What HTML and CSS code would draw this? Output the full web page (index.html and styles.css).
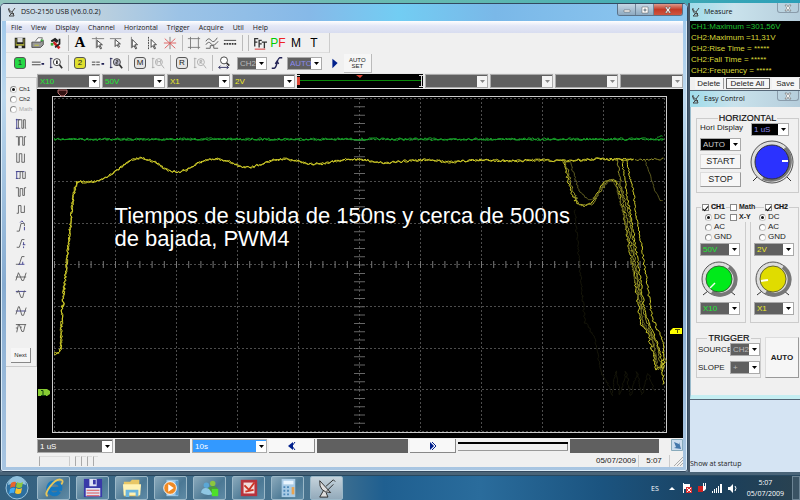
FILE: index.html
```
<!DOCTYPE html>
<html lang="es">
<head>
  <meta charset="UTF-8" />
  <title>DSO-2150 USB</title>
  <link rel="stylesheet" href="styles.css">
</head>
<body>
  <main class="desktop">
    <section class="window scope-window">
      <header class="titlebar">
        <svg class="app-icon" viewBox="0 0 10 10"><path d="M1 2l6 5M2 1q-1 6 5 6M5 5l3-4M5 6l-3 3h5l-1-3" /></svg>
        <h1>DSO-2150 USB (V6.0.0.2)</h1>
        <div class="window-buttons">
          <button aria-label="Minimize"><svg viewBox="0 0 8 8"><path d="M1 4h6v2H1z" /></svg></button>
          <button aria-label="Maximize"><svg viewBox="0 0 8 8"><path fill-rule="evenodd" d="M1 1h6v6H1zM3 3v2h2V3z" /></svg></button>
          <button class="close" aria-label="Close"><svg viewBox="0 0 8 8"><path d="M1 1h2l1 2 1-2h2L5 4l2 3H5L4 5 3 7H1l2-3z" /></svg></button>
        </div>
      </header>

      <nav class="menu">
        <button>File</button>
        <button>View</button>
        <button>Display</button>
        <button>Channel</button>
        <button>Horizontal</button>
        <button>Trigger</button>
        <button>Acquire</button>
        <button>Util</button>
        <button>Help</button>
      </nav>

      <div class="toolbars">
        <div class="toolbar first">
          <button class="tool" aria-label="Save"><svg viewBox="0 0 16 16"><path fill="#222" d="M2 2h12v12H2z" /><path fill="#a5a536" d="M3 3h1v8H3zM12 3h1v8h-1zM3 9h10v2H3z" /><path fill="#ddd" d="M5 2h6v5H5zM6 11h4v3H6z" /></svg></button>
          <button class="tool" aria-label="Print"><svg viewBox="0 0 16 16"><path fill="#fff" stroke="#666" d="M5 6l3-4h5l-2 5" /><path fill="#999" stroke="#444" d="M1 7h10l3-2v5l-3 3H1z" /><path fill="#cc3" d="M4 10h5v1H4z" /><path fill="#4a4" d="M11 4h3v2h-3z" /></svg></button>
          <button class="tool" aria-label="Utility"><svg viewBox="0 0 16 16"><path fill="#222" d="M2 5l5-3 4 3-2 3-3-2-3 1z" /><path stroke="#c22" stroke-width="3" d="M5 7l7 7" /><path stroke="#222" stroke-width="2" d="M12 3v6l-5 4" fill="none" /><path fill="#3a3" d="M2 8h3v3H2z" /></svg></button>
          <span class="sep"></span>
          <button class="tool letter serif">A</button>
          <button class="tool" aria-label="Cross cursor"><svg class="line" viewBox="0 0 16 16"><path d="M1 3h14M6 1v13" stroke="#777" /><path fill="#fff" d="M7 5v8l2-2 2 4 1-1-2-4h3z" /></svg></button>
          <button class="tool" aria-label="Horizontal cursor"><svg class="line" viewBox="0 0 16 16"><path d="M1 3h13" stroke="#777" /><path fill="#fff" d="M7 4v8l2-2 2 3 1-1-2-3h3z" /></svg></button>
          <button class="tool" aria-label="Vertical cursor"><svg class="line" viewBox="0 0 16 16"><path d="M5 1v13" stroke="#777" /><path fill="#fff" d="M6 4v9l2-2 2 4 1-1-2-4h3z" /></svg></button>
          <button class="tool" aria-label="Dotted cursor"><svg class="line" viewBox="0 0 16 16"><path d="M4 1v14" stroke-dasharray="2 1" /><path fill="#fff" d="M7 4v9l2-2 2 4 1-1-2-4h3z" /></svg></button>
          <button class="tool" aria-label="Clear cursors"><svg class="line" viewBox="0 0 16 16"><path stroke="#777" d="M8 1v14" /><path stroke="#d55" d="M2 3l12 11M14 3L2 14M1 8h14" /></svg></button>
          <span class="sep"></span>
          <button class="tool" aria-label="Grid"><svg class="line" viewBox="0 0 16 16"><path stroke="#777" d="M4 1v14M13 1v14M1 3h14M1 13h14" /></svg></button>
          <button class="tool" aria-label="Persistence"><svg class="line" viewBox="0 0 16 16"><path stroke="#555" fill="none" d="M1 6q3-5 6-1t7-3M1 10q3-5 6-1t8-3M1 14h5v-3h4v3h5" /></svg></button>
          <button class="tool" aria-label="Line style"><svg class="line" viewBox="0 0 16 16"><path d="M1 5h14" /><path stroke-width="2" stroke-dasharray="2 1" d="M1 9h14" /></svg></button>
          <span class="sep"></span>
          <span class="sep"></span>
          <button class="tool" aria-label="FFT"><svg class="line" viewBox="0 0 16 16"><path stroke-width="1.500" fill="none" d="M2 12V3h4M2 7h3M7 13V5h3M7 9h3M10 7h6M13 7v7" /><path stroke="#d22" d="M2 15h12" /></svg></button>
          <button class="tool letter"><span class="pass">P</span><span class="fail">F</span></button>
          <button class="tool letter">M</button>
          <button class="tool letter">T</button>
        </div>
        <div class="toolbar">
          <button class="tool"><span class="badge green">1</span></button>
          <button class="tool" aria-label="CH1 level"><svg class="line" viewBox="0 0 16 16"><path d="M1 7h10M1 10h10" /><path stroke="#225" stroke-width="2" d="M12 9h3" /></svg></button>
          <button class="tool" aria-label="CH1 zoom"><svg class="line" viewBox="0 0 16 16"><path stroke="#225" d="M2 2v12M1 3h3M1 13h3" /><circle cx="9" cy="7" r="4" fill="#fff" /><path stroke-width="2" d="M12 10l3 4M9 5v4" /></svg></button>
          <span class="sep"></span>
          <button class="tool"><span class="badge yellow">2</span></button>
          <button class="tool" aria-label="CH2 level"><svg class="line" viewBox="0 0 16 16"><path d="M1 7h10M1 10h10" stroke-dasharray="4 1" /><path stroke="#225" stroke-width="2" d="M12 9h3" /></svg></button>
          <button class="tool" aria-label="CH2 zoom"><svg class="line" viewBox="0 0 16 16"><path stroke="#225" d="M2 2v12M1 3h3M1 13h3" /><circle cx="9" cy="7" r="4" fill="#bbc" /><path stroke-width="2" d="M12 10l3 4" /><path d="M8 5h2v2H8v2h2" fill="none" /></svg></button>
          <span class="sep"></span>
          <button class="tool"><span class="badge">M</span></button>
          <button class="tool" aria-label="Math zoom"><svg class="line off" viewBox="0 0 16 16"><path d="M2 2v12M1 3h3M1 13h3M7 9V5l2 2 2-2v4M12 10l3 4" fill="none" /><circle cx="9" cy="7" r="4" fill="none" /></svg></button>
          <span class="sep"></span>
          <button class="tool"><span class="badge">R</span></button>
          <button class="tool" aria-label="Reference zoom"><svg class="line off" viewBox="0 0 16 16"><path d="M2 2v12M1 3h3M1 13h3M8 9V5h2v2H8l3 2M12 10l3 4" fill="none" /><circle cx="9" cy="7" r="4" fill="none" /></svg></button>
          <span class="sep"></span>
          <button class="tool" aria-label="Time zoom"><svg class="line" viewBox="0 0 16 16"><circle cx="8" cy="5" r="4" fill="#fff" /><path stroke-width="2" d="M11 8l3 3" /><path stroke="#225" d="M2 13h11M4 11l-2 2 2 2M11 11l2 2-2 2" fill="none" /></svg></button>
          <select class="combo small-ch" aria-label="Trigger source"><option>CH2</option></select>
          <button class="tool" aria-label="Rising edge"><svg class="line" viewBox="0 0 16 16"><path stroke="#225" stroke-width="1.500" fill="none" d="M2 14h3Q7 13 8 8t3-6h3M6 9l2-3 2 3" /></svg></button>
          <select class="combo blue-text small-mode" aria-label="Trigger mode"><option>AUTO</option></select>
          <button class="tool" aria-label="Run"><svg viewBox="0 0 16 16"><path fill="#00208c" d="M5 3l6 5-6 6z" /></svg></button>
          <button class="autoset">AUTO<br>SET</button>
        </div>
      </div>

      <div class="work">
        <aside class="measures">
          <div class="measure-panel">
            <label><input type="radio" name="src" checked> Ch1</label>
            <label><input type="radio" name="src"> Ch2</label>
            <label class="off"><input type="radio" name="src" disabled> Math</label>
            <button aria-label="Vpp"><svg viewBox="0 0 14 14"><path class="mark" d="M2 1v12M1 2h5M1 12h5" /><path d="M4 12V2h4v10h2V2h2v10h1" /></svg></button>
            <button aria-label="Vamp"><svg viewBox="0 0 14 14"><path d="M1 2h3v10h1V2h4v10h2V2h2" /></svg></button>
            <button aria-label="Vmin"><svg viewBox="0 0 14 14"><path d="M2 1v11h3V2h3v10h3V2" /></svg></button>
            <button aria-label="Vmax"><svg viewBox="0 0 14 14"><path class="mark" d="M2 3v8M1 3h3M1 11h3M3 3h8" /><path d="M4 11h2V3h3v8h3V3" /></svg></button>
            <button aria-label="Vtop"><svg viewBox="0 0 14 14"><path d="M1 2h3v10h2V3h3v8h2V2h2" /></svg></button>
            <button aria-label="Vbase"><svg viewBox="0 0 14 14"><path d="M2 12h2V3h3v8h4V3" /></svg></button>
            <button aria-label="Overshoot"><svg viewBox="0 0 14 14"><path d="M2 13h3l2-9h4v3" /><path class="mark" d="M6 3l2-2 2 2M11 8v4" /></svg></button>
            <button aria-label="Preshoot"><svg viewBox="0 0 14 14"><path d="M2 12h3l3-9h3" /><path class="mark" d="M10 6v3M10 11v2M9 9h3" /></svg></button>
            <button aria-label="Rise time"><svg viewBox="0 0 14 14"><path d="M1 12h4l3-9h3" /><path class="mark" d="M4 12h7M9 9v3" /></svg></button>
            <button aria-label="Mean"><svg viewBox="0 0 14 14"><path d="M1 11L4 2l2 4 2 5h2l3-9M1 7h12" /></svg></button>
            <button aria-label="RMS"><svg viewBox="0 0 14 14"><path class="mark" d="M1 4h12" /><path d="M2 6l2-3 3 8h2l2-8" /></svg></button>
            <button aria-label="Cycle mean"><svg viewBox="0 0 14 14"><path class="mark" d="M1 7h12" /><path d="M1 11L4 2h1l3 10h2l3-9" /></svg></button>
            <button aria-label="Cycle RMS"><svg viewBox="0 0 14 14"><path d="M1 3h12M2 12l2-9h1l3 8h2l2-8M1 7h2M6 6h2" /></svg></button>
            <button class="next">Next</button>
          </div>
        </aside>

        <div class="display">
          <div class="channel-bar">
            <select class="combo green-text" aria-label="CH1 probe"><option>X10</option></select>
            <select class="combo green-text" aria-label="CH1 volts"><option>50V</option></select>
            <select class="combo yellow-text" aria-label="CH2 probe"><option>X1</option></select>
            <select class="combo yellow-text" aria-label="CH2 volts"><option>2V</option></select>
            <svg class="overview" viewBox="0 0 126 14" preserveAspectRatio="none">
              <path stroke="#0a8a0a" d="M3 6.500h121" />
              <path fill="#d43" d="M0 3h3v8H0zM59 1h7l-3 3z" />
              <path stroke="#ddd" fill="none" d="M0 1.500h3M122 1.500h4M124.500 1v11M122 12.500h4" />
            </svg>
            <select class="combo" disabled aria-label="Channel 3 probe"><option></option></select>
            <select class="combo" disabled aria-label="Channel 3 volts"><option></option></select>
            <select class="combo" disabled aria-label="Channel 4 probe"><option></option></select>
            <select class="combo" disabled aria-label="Channel 4 volts"><option></option></select>
          </div>

          <div class="screen">
            <svg id="plot" class="plot" viewBox="37 89 646 349" preserveAspectRatio="none">
              <g class="grid">
                <path d="M54 98.500H665M54 139.500H665M54 181.500H665M54 223.500H665M54 264.500H665M54 306.500H665M54 348.500H665M54 389.500H665M54 431.500H665" />
                <path d="M54.500 98V431M115.500 98V431M176.500 98V431M237.500 98V431M298.500 98V431M359.500 98V431M420.500 98V431M481.500 98V431M542.500 98V431M603.500 98V431M664.500 98V431" />
              </g>
              <path class="ticks-x" d="M54 264.500H665" />
              <path class="ticks-y" d="M359.500 98V431" />
              <rect class="frame" x="52.500" y="96.500" width="614" height="336" />
              <path class="trigger-pos" d="M58 90h9v3l-3 3h-3l-3-3z" />
              <path fill="#8c3" d="M38 389h9l3 2v3l-3 2h-9z" />
              <path stroke="#141" d="M41 390.500h2v5M41 395.500h5" fill="none" />
              <path fill="#ff0" d="M682 328h-9l-3 3v3h12z" />
              <path stroke="#550" d="M675 329.500h5M677.500 329v4" fill="none" />
            </svg>
            <p class="caption">Tiempos de subida de 150ns y cerca de 500ns<br>de bajada, PWM4</p>
          </div>

          <div class="time-bar">
            <select class="combo white-text" aria-label="Time base"><option>1 uS</option></select>
            <span class="slot"></span>
            <select class="combo selected" aria-label="Persistence time"><option>10s</option></select>
            <button class="step" aria-label="Left"><svg viewBox="0 0 10 10"><path fill="#00208c" d="M6 1v8L1 5z" /><path stroke="#00208c" d="M8 1L5 5l3 4" fill="none" /></svg></button>
            <span class="slot"></span>
            <button class="step" aria-label="Right"><svg viewBox="0 0 10 10"><path fill="#00208c" d="M2 1v8l4-4z" /><path stroke="#00208c" d="M4 1l4 4-4 4" fill="none" /></svg></button>
            <input class="position" type="range" min="0" max="100" value="100" aria-label="Position">
            <span class="slot"></span>
            <svg class="corner" viewBox="0 0 12 12"><path fill="#cde" stroke="#8ab" d="M.500.500h11v11H.500z" /><path fill="#47a" d="M3 3l5 2V3l2 7-7-1 2-1z" /></svg>
          </div>
        </div>
      </div>

      <footer class="status">
        <span class="status-left"></span>
        <span class="status-cell wide"></span>
        <span class="status-cell"></span><span class="status-cell"></span><span class="status-cell"></span><span class="status-cell"></span>
        <span class="status-date">05/07/2009</span>
        <span class="status-time">5:07</span>
        <svg class="grip" viewBox="0 0 9 9"><path d="M0 9l9-9M3 9l6-6M6 9l3-3" /></svg>
      </footer>
    </section>

    <aside class="side">
      <section class="tool-window">
        <header class="titlebar">
          <svg class="app-icon" viewBox="0 0 10 10"><path d="M1 2l6 5M2 1q-1 6 5 6M5 5l3-4M5 6l-3 3h5l-1-3" /></svg>
          <h2>Measure</h2>
          <button class="tool-close" aria-label="Close"><svg viewBox="0 0 8 8"><path d="M1 1h2l1 2 1-2h2L5 4l2 3H5L4 5 3 7H1l2-3z" /></svg></button>
        </header>
        <ul class="readings">
          <li class="ch1">CH1:Maximum =301,56V</li>
          <li>CH2:Maximum =11,31V</li>
          <li>CH2:Rise Time = *****</li>
          <li>CH2:Fall Time = *****</li>
          <li>CH2:Frequency = *****</li>
        </ul>
        <div class="reading-actions">
          <button>Delete</button>
          <button class="focus">Delete All</button>
          <button>Save</button>
        </div>
      </section>

      <section class="tool-window">
        <header class="titlebar">
          <svg class="app-icon" viewBox="0 0 10 10"><path d="M1 2l6 5M2 1q-1 6 5 6M5 5l3-4M5 6l-3 3h5l-1-3" /></svg>
          <h2>Easy Control</h2>
          <button class="tool-close" aria-label="Close"><svg viewBox="0 0 8 8"><path d="M1 1h2l1 2 1-2h2L5 4l2 3H5L4 5 3 7H1l2-3z" /></svg></button>
        </header>
        <div class="controls">
          <fieldset class="group horizontal">
            <legend>HORIZONTAL</legend>
            <div class="stack">
              <label for="hori">Hori Display</label>
              <select id="hori" class="combo black"><option>AUTO</option></select>
              <button class="push">START</button>
              <button class="push">STOP</button>
            </div>
            <div class="stack dial">
              <select class="combo black blue-text" aria-label="Time per division"><option>1 uS</option></select>
              <svg class="knob big" viewBox="0 0 46 46">
                <path class="legs" d="M9 37l-5 5M37 37l5 5" />
                <circle class="rim" cx="23" cy="23" r="21" />
                <path class="shade" d="M36 9a19 19 0 0 1-22 30" />
                <circle cx="23" cy="23" r="17" fill="#2b32ff" stroke="#333" />
                <path stroke="#fff" stroke-width="2" d="M33 22h6" />
              </svg>
            </div>
          </fieldset>

          <div class="channels">
            <fieldset class="group channel">
              <legend><label><input type="checkbox" checked> CH1</label></legend>
              <label><input type="radio" name="c1" checked> DC</label>
              <label><input type="radio" name="c1"> AC</label>
              <label><input type="radio" name="c1"> GND</label>
              <select class="combo green-text" aria-label="CH1 volts per division"><option>50V</option></select>
              <svg class="knob" viewBox="0 0 38 38">
                <path class="legs" d="M8 31l-5 4M30 31l5 4" />
                <circle class="rim" cx="19" cy="19" r="17" />
                <path class="shade" d="M29 7a15 15 0 0 1-17 25" />
                <circle cx="19" cy="19" r="13" fill="#00ea1a" stroke="#363" />
                <path stroke="#efe" stroke-width="1.500" d="M15 23l-5 5" />
              </svg>
              <select class="combo green-text" aria-label="CH1 probe"><option>X10</option></select>
            </fieldset>
            <fieldset class="group channel">
              <legend><label><input type="checkbox" checked> CH2</label></legend>
              <label><input type="radio" name="c2" checked> DC</label>
              <label><input type="radio" name="c2"> AC</label>
              <label><input type="radio" name="c2"> GND</label>
              <select class="combo yellow-text" aria-label="CH2 volts per division"><option>2V</option></select>
              <svg class="knob" viewBox="0 0 38 38">
                <path class="legs" d="M8 31l-5 4M30 31l5 4" />
                <circle class="rim" cx="19" cy="19" r="17" />
                <path class="shade" d="M29 7a15 15 0 0 1-17 25" />
                <circle cx="19" cy="19" r="13" fill="#e0dc00" stroke="#663" />
                <path stroke="#ffe" stroke-width="2" d="M7 21l7-1" />
              </svg>
              <select class="combo yellow-text" aria-label="CH2 probe"><option>X1</option></select>
            </fieldset>
            <div class="math">
              <label><input type="checkbox"> Math</label>
              <label><input type="checkbox"> X-Y</label>
            </div>
          </div>

          <div class="trigger-row">
            <fieldset class="group trigger">
              <legend>TRIGGER</legend>
              <label for="source">SOURCE</label>
              <select id="source" class="combo"><option>CH2</option></select>
              <label for="slope">SLOPE</label>
              <select id="slope" class="combo"><option>+</option></select>
            </fieldset>
            <button class="push auto">AUTO</button>
          </div>
        </div>
      </section>

      <div class="startup">Show at startup</div>
    </aside>
  </main>

  <footer class="taskbar">
    <button class="start" aria-label="Start"><svg viewBox="0 0 24 24">
      <circle cx="12" cy="12" r="11" fill="#2d6f9f" stroke="#9cc4dc" />
      <path fill="#8fc0dc" d="M3 9a9 9 0 0 1 18 0q-9-4-18 0" />
      <path fill="#e8642c" d="M6 7q3-2 5-1l-1 5q-2-1-5 1z" /><path fill="#8cc63f" d="M12 6q3 2 6 0l-1 5q-3 2-6 0z" />
      <path fill="#3fa9f5" d="M5 13q3-2 5-1l-1 5q-2-1-5 1z" /><path fill="#fbc52d" d="M11 12q3 2 6 0l-1 5q-3 2-6 0z" />
    </svg></button>
    <nav class="tasks">
      <button aria-label="Internet Explorer"><svg viewBox="0 0 22 22"><path fill="none" stroke="#1478c0" stroke-width="4" d="M17 15q-4 5-9 2T5 9t8-4 5 7H6" /><path fill="none" stroke="#e6c65a" stroke-width="2" d="M4 20Q0 18 7 9t12-7q3 1 0 5" /></svg></button>
      <button aria-label="Disk"><svg viewBox="0 0 22 22"><path fill="#3939a8" d="M1 1h20v20H1z" /><path fill="#dfe3f4" d="M7 1h8v8H7zM3 11h16v9H3z" /><path fill="#3939a8" d="M11 2h3v5h-3z" /><path stroke="#d44" d="M4 13.500h14M4 16.500h14M4 19.500h14" /></svg></button>
      <button aria-label="Explorer"><svg viewBox="0 0 22 22"><path fill="#e8c766" d="M2 4h7l2-2h8v18H2z" /><path fill="#fff3b5" d="M1 7h20l-1 12H2z" /><path fill="#6bb5dd" d="M4 13h14v7h-3v-4H8v5H4z" /></svg></button>
      <button aria-label="Media Player"><svg viewBox="0 0 22 22"><path fill="#9cc8e8" d="M6 2h13v18H6z" /><path fill="#5a9acc" d="M16 3h3v16h-3z" /><circle cx="10" cy="11" r="7" fill="#f08a24" stroke="#fff" /><path fill="#fff" d="M8 7l6 4-6 4z" /></svg></button>
      <button aria-label="Messenger"><svg viewBox="0 0 22 22"><circle cx="14" cy="6" r="3" fill="#8cc63f" /><circle cx="7" cy="8" r="3" fill="#5aa7d6" /><path fill="#4c9c3c" d="M9 11q8-5 11 2v4h-9z" /><path fill="#8fc7e4" d="M1 16q2-7 9-4l4 6q-8 2-13-2z" /><path fill="#4ee02a" d="M13 12h7v8h-7z" /></svg></button>
      <button aria-label="Drawing"><svg viewBox="0 0 22 22"><path fill="#b8323c" d="M2 2h18v18H2z" /><path fill="#f3dcdc" d="M5 5h12v12H5z" /><path stroke="#c32" stroke-width="2" fill="none" d="M6 8l5 5 6-8M7 15l9-2" /></svg></button>
      <button aria-label="Calculator"><svg viewBox="0 0 22 22"><path fill="#a9cbe6" d="M4 1h15v20H4z" /><path fill="#eaf5ff" d="M6 3h11v4H6z" /><path stroke="#4b87b8" stroke-width="2" stroke-dasharray="2 2" d="M6 10h8M6 14h8M6 18h8" /><path fill="#e8a452" d="M15 10h3v8h-3z" /></svg></button>
      <button class="active" aria-label="DSO-2150"><svg viewBox="0 0 22 22"><path fill="#ddd" stroke="#222" d="M3 3Q2 16 15 16zM10 9l8-7M11 14l7-7M18 2l2 2M7 14l-4 7h9l-2-5" /></svg></button>
    </nav>
    <div class="tray">
      <span class="lang">ES</span>
      <svg viewBox="0 0 10 10"><path fill="#fff" d="M2 7l3-3 3 3z" /></svg>
      <svg viewBox="0 0 10 10"><path fill="#fff" d="M1 0h1v10H1zM2 1h6v5H2z" /><path fill="#d33" d="M4 4h6v6H4z" /><path stroke="#fff" d="M5 5l4 4M9 5L5 9" /></svg>
      <svg viewBox="0 0 10 10"><path fill="#fff" d="M5 3h4v3L7 8H5zM6 0h1v3H6zM8 0h1v3H8z" /><path fill="#c22" d="M1 3h5v6H1z" /></svg>
      <svg viewBox="0 0 10 10"><path fill="#fff" d="M0 8h1v2H0zM2 6h1v4H2zM4 5h1v5H4zM6 3h1v7H6zM8 1h2v9H8z" /></svg>
      <svg viewBox="0 0 10 10"><path fill="#fff" d="M1 4h2l3-3v9L3 7H1z" /><path stroke="#fff" fill="none" d="M8 3q2 2 0 5" /></svg>
      <time class="clock">5:07<br>05/07/2009</time>
      <button class="show-desktop" aria-label="Show desktop"></button>
    </div>
  </footer>

  <script>
    const plot = document.getElementById('plot');

    // small fixed-seed generator so the noise looks the same on every load
    let seed = 7;
    function noise() {
      seed = (seed * 16807) % 2147483647;
      return seed / 2147483647 - 0.5;
    }

    // draw a trace through the points, one noisy step per pixel
    function trace(points, cls, amount) {
      let d = '';
      for (let i = 0; i < points.length - 1; i++) {
        const [x1, y1] = points[i];
        const [x2, y2] = points[i + 1];
        const steps = Math.max(1, Math.round(Math.hypot(x2 - x1, y2 - y1) / 1.5));
        for (let s = 0; s < steps; s++) {
          const t = s / steps;
          const x = x1 + (x2 - x1) * t + (Math.abs(y2 - y1) > Math.abs(x2 - x1) ? noise() * amount : 0);
          const y = y1 + (y2 - y1) * t + noise() * amount;
          d += (d ? 'L' : 'M') + x.toFixed(1) + ' ' + y.toFixed(1);
        }
      }
      const path = document.createElementNS('http://www.w3.org/2000/svg', 'path');
      path.setAttribute('d', d);
      path.setAttribute('class', 'trace ' + cls);
      plot.appendChild(path);
    }

    trace([[54, 139], [665, 139]], 'ch1-trace', 2.5);
    trace([[54, 139.5], [665, 139.5]], 'ch1-trace', 2);
    trace([[657, 138], [664, 138]], 'ch1-trace', 5);

    const main = [[54, 354], [59, 353], [61, 347], [62, 312], [66, 270], [69, 238], [72, 208], [75, 187], [78, 181],
      [82, 182], [90, 182], [100, 180], [110, 175], [120, 168], [130, 161], [138, 158], [147, 159], [157, 163],
      [167, 170], [177, 172], [187, 170], [198, 163], [207, 160], [217, 159], [228, 161], [239, 166], [250, 168],
      [261, 164], [273, 160], [285, 159], [298, 161], [310, 164], [322, 164], [335, 161], [350, 159], [365, 160],
      [385, 163], [405, 161], [425, 160], [450, 162], [480, 160], [510, 161], [540, 160], [565, 161], [595, 159], [635, 160]];
    trace(main, 'ch2-trace', 2.5);
    trace(main, 'ch2-trace', 2.5);
    trace([[635, 160], [665, 159]], 'ch2-trace dim', 2);

    // falling edges kept on screen by the persistence
    const hump = [[563, 161], [567, 175], [571, 192], [577, 204], [584, 206], [591, 204], [597, 194], [603, 184], [609, 180],
      [615, 181], [619, 192], [624, 215], [629, 245], [635, 282], [641, 325], [648, 333], [653, 355], [656, 369], [661, 368], [664, 358]];
    trace(hump, 'ch2-trace', 2.5);
    trace(hump.map(([x, y]) => [x + 2, y]), 'ch2-trace dim', 2.5);
    trace([[570, 161], [575, 178], [580, 192], [587, 199], [594, 199], [602, 187], [611, 180], [617, 188], [625, 220], [632, 262], [643, 322], [652, 336], [658, 365]], 'ch2-trace faint', 2);
    trace([[617, 160], [621, 185], [629, 215], [636, 265], [643, 310], [649, 328], [657, 345], [662, 372]], 'ch2-trace dim', 2);
    trace([[622, 160], [626, 190], [632, 222], [639, 270], [645, 313], [653, 332], [661, 355], [664, 386]], 'ch2-trace', 2);
    trace([[626, 160], [632, 184], [638, 225], [645, 270], [652, 318], [659, 332], [663, 341], [664, 370]], 'ch2-trace', 2);
    trace([[645, 160], [650, 174], [655, 191], [660, 200], [664, 201]], 'ch2-trace faint', 1);
    trace([[575, 210], [580, 270], [585, 322], [595, 337], [600, 370], [608, 383], [612, 395], [616, 370], [620, 395],
      [626, 372], [631, 395], [637, 372], [642, 395], [648, 373], [655, 392]], 'ch2-trace ghost', 2);
  </script>
</body>
</html>
```

FILE: styles.css
```
* {
  box-sizing: border-box;
}
body {
  margin: 0;
  height: 100vh;
  display: flex;
  flex-direction: column;
  overflow: hidden;
  font-family: "Liberation Sans", Arial, sans-serif;
  font-size: 8px;
  color: #222;
  background: #3c5870;
}
button, select, input {
  font: inherit;
  color: inherit;
  margin: 0;
  padding: 0;
}
button {
  border: none;
  background: none;
}
h1, h2, p, ul {
  margin: 0;
  padding: 0;
  list-style: none;
  font-weight: normal;
}
svg {
  display: block;
}
.desktop {
  flex: 1;
  min-height: 0;
  display: grid;
  grid-template-columns: minmax(0, 1fr) 112px;
  padding: 3px 0;
  background: linear-gradient(90deg, #8fc4bc, #5fb8b0 60%, #2b9fb8) top / 100% 50% no-repeat, #4a6478;
}

/* main window */
.scope-window {
  display: flex;
  flex-direction: column;
  min-height: 0;
  padding: 0 5px 5px 6px;
  border-radius: 5px 5px 3px 3px;
  background: linear-gradient(#9cc6ea, #bcd8ee 20%, #86abd0 60%, #a9c6e2);
  box-shadow: inset 0 0 0 1px #33495f, inset 0 0 0 2px #dcecf8;
}
.titlebar {
  display: flex;
  align-items: center;
  height: 18px;
  font-family: "Open Sans", sans-serif;
}
.titlebar h1, .titlebar h2 {
  flex: 1;
  font-size: 7px;
  line-height: 10px;
  color: #111;
}
.scope-window .titlebar {
  margin: 1px -4px 0 -5px;
  height: 17px;
  padding: 0 0 2px 6px;
  border-radius: 4px 4px 0 0;
  background: linear-gradient(90deg, #d3e1ec, #b9cfdf 15%, #9cc3e6 26%, #86b9e8 45%, #72cdf3 58%, #7ab8e8 72%, #8fc8f0);
}
.app-icon {
  width: 10px;
  height: 10px;
  margin-right: 4px;
  fill: none;
  stroke: #444;
}
.window-buttons {
  display: flex;
  align-self: flex-start;
  margin-right: 4px;
  border: 1px solid #5b7288;
  border-top: none;
  border-radius: 0 0 3px 3px;
  overflow: hidden;
}
.window-buttons button {
  width: 18px;
  height: 11px;
  display: grid;
  place-items: center;
  border-right: 1px solid #6e8498;
  background: linear-gradient(#c5d6e4, #8da9c0);
}
.window-buttons .close {
  width: 28px;
  border: none;
  background: linear-gradient(#dd9a8c, #c23c28 50%, #cf5540);
}
.window-buttons svg, .tool-close svg {
  width: 8px;
  height: 8px;
  fill: #fff;
  stroke: #555;
  stroke-width: 0.5;
}
.menu {
  display: flex;
  gap: 9px;
  height: 12px;
  padding-left: 5px;
  font-family: "Open Sans", sans-serif;
  font-size: 7px;
  background: linear-gradient(#fff, #e4e8f6 40%, #d8ddf0);
}
.toolbars {
  background: #f0f0f0;
}
.toolbar {
  display: flex;
  align-items: center;
  height: 20px;
  padding-left: 5px;
}
.toolbar.first {
  width: max-content;
  padding-right: 6px;
  border-right: 1px solid #ccc;
  border-bottom: 1px solid #ddd;
}
.tool {
  width: 18px;
  height: 18px;
  flex: none;
  display: flex;
  align-items: center;
  justify-content: center;
}
.tool svg {
  width: 14px;
  height: 14px;
}
.line {
  fill: #222;
  stroke: #333;
}
.line.off {
  stroke: #aaa;
}
.letter {
  font-size: 12px;
  color: #000;
}
.serif {
  font-family: "Liberation Serif", serif;
  font-size: 15px;
  font-weight: bold;
}
.pass {
  color: #0c0;
}
.fail {
  color: #e22;
}
.sep {
  width: 1px;
  height: 16px;
  margin: 0 2px 0 3px;
  background: #bbb;
}
.badge {
  width: 12px;
  height: 12px;
  border: 1px solid #555;
  border-radius: 3px;
  line-height: 10px;
  background: #e4e4e4;
}
.badge.green {
  background: #25d845;
}
.badge.yellow {
  background: #dfdf2e;
}

/* drop-downs: dark field with a white arrow button on the right */
.combo {
  appearance: none;
  display: block;
  width: 100%;
  min-width: 0;
  height: 13px;
  padding: 0 12px 0 2px;
  border: 1px solid #aaa;
  border-radius: 0;
  line-height: 11px;
  color: #bbb;
  background: #606060 url("data:image/svg+xml,%3Csvg xmlns='http://www.w3.org/2000/svg' viewBox='0 0 10 11'%3E%3Cpath fill='%23fff' d='M0 0h10v11H0z'/%3E%3Cpath d='M3 4h5L5.500 7z'/%3E%3C/svg%3E") right center / 10px 11px no-repeat;
}
.combo:disabled {
  opacity: 1;
  background-image: url("data:image/svg+xml,%3Csvg xmlns='http://www.w3.org/2000/svg' viewBox='0 0 10 11'%3E%3Cpath fill='%23f4f4f4' d='M0 0h10v11H0z'/%3E%3Cpath fill='%23888' d='M3 4h5L5.500 7z'/%3E%3C/svg%3E");
}
.combo.black {
  background-color: #000;
  color: #ccc;
}
.combo.green-text {
  color: #1ee832;
}
.combo.yellow-text {
  color: #ece828;
}
.combo.white-text {
  color: #fff;
}
.combo.blue-text {
  color: #8a8aee;
}
.combo.selected {
  background-color: #3399ff;
  color: #fff;
}
.small-ch {
  width: 30px;
  margin: 0 1px 0 4px;
  padding-right: 10px;
}
.small-mode {
  width: 35px;
  margin: 0 4px 0 1px;
  padding-right: 10px;
}
.autoset {
  height: 19px;
  padding: 0 5px;
  font-size: 6px;
  line-height: 6px;
  border-right: 1px solid #bbb;
  border-bottom: 1px solid #bbb;
  background: #f6f6f6;
}

.work {
  flex: 1;
  min-height: 0;
  display: flex;
}
.measures {
  width: 31px;
  flex: none;
  padding-top: 4px;
  background: #f0f0f0;
}
.measure-panel {
  display: flex;
  flex-direction: column;
  align-items: center;
  padding: 6px 0 3px;
  border: 1px solid #ccc;
  border-left: none;
}
.measure-panel label {
  align-self: flex-start;
  display: flex;
  align-items: center;
  gap: 2px;
  height: 10px;
  padding-left: 4px;
  font-size: 6px;
}
.measure-panel .off {
  color: #aaa;
}
.measure-panel button {
  height: 17px;
}
.measure-panel label + button {
  margin-top: 1px;
}
.measure-panel svg {
  width: 12px;
  height: 14px;
  fill: none;
  stroke: #555;
}
.measure-panel .mark {
  stroke: #338;
}
.measure-panel .next {
  width: 20px;
  height: 15px;
  margin-top: 12px;
  font-size: 6px;
  border-right: 1px solid #888;
  border-bottom: 1px solid #888;
  background: #f6f6f6;
}
input[type="radio"], input[type="checkbox"] {
  appearance: none;
  flex: none;
  display: grid;
  place-items: center;
  width: 7px;
  height: 7px;
  border: 1px solid #888;
  background: #fff;
}
input[type="radio"] {
  border-radius: 50%;
  border-right-color: #ccc;
  border-bottom-color: #ccc;
}
input[type="radio"]:checked::before {
  content: "";
  width: 3px;
  height: 3px;
  border-radius: 50%;
  background: #111;
}
input[type="checkbox"]:checked::before {
  content: "";
  width: 2px;
  height: 5px;
  border: solid #111;
  border-width: 0 1px 1px 0;
  transform: rotate(40deg);
}

.display {
  flex: 1;
  min-width: 0;
  display: flex;
  flex-direction: column;
}
.channel-bar {
  display: grid;
  grid-template-columns: repeat(4, minmax(0, 1fr)) minmax(0, 2fr) repeat(4, minmax(0, 1fr));
  gap: 2px;
  height: 16px;
  padding-top: 1px;
  background: #e8e8e8;
}
.channel-bar .combo {
  height: 14px;
}
.overview {
  width: 100%;
  height: 14px;
  background: #000;
}
.screen {
  flex: 1;
  min-height: 0;
  position: relative;
  background: #000;
}
.plot {
  width: 100%;
  height: 100%;
}
.grid path {
  stroke: #4c4c4c;
  stroke-dasharray: 2 2;
}
.ticks-x {
  stroke: #777;
  stroke-width: 7;
  stroke-dasharray: 1 11.2;
}
.ticks-y {
  stroke: #666;
  stroke-width: 11;
  stroke-dasharray: 1 7.33;
}
.frame {
  fill: none;
  stroke: #ccc;
}
.trigger-pos {
  fill: #311;
  stroke: #b77;
}
.trace {
  fill: none;
}
.ch1-trace {
  stroke: #14a526;
}
.ch2-trace {
  stroke: #cfcb28;
}
.ch2-trace.dim {
  stroke: #928f2a;
}
.ch2-trace.faint {
  stroke: #5c5a20;
}
.ch2-trace.ghost {
  stroke: #151509;
}
/* note written over the waveform */
.caption {
  position: absolute;
  left: 12%;
  top: 33%;
  font-size: 22px;
  line-height: 23px;
  white-space: nowrap;
  color: #fff;
}
.time-bar {
  display: grid;
  grid-template-columns: 76fr 75fr 75fr 46fr 91fr 46fr 110fr 89fr 22fr;
  gap: 2px;
  height: 16px;
  padding-top: 1px;
  background: #f0f0f0;
}
.time-bar .combo {
  height: 14px;
}
.slot {
  height: 14px;
  background: #606060;
}
.step {
  display: grid;
  place-items: center;
  height: 14px;
  border-right: 1px solid #888;
  border-bottom: 1px solid #888;
  background: #f8f8f8;
}
.step svg {
  width: 10px;
  height: 10px;
}
.position {
  appearance: none;
  width: 100%;
  height: 9px;
  margin-top: 3px;
  border: solid #000;
  border-width: 2px 0 1px;
  border-bottom-color: #999;
  border-radius: 0;
  background: #f0f0f0;
}
.position::-webkit-slider-thumb {
  appearance: none;
  width: 1px;
  height: 6px;
  background: #888;
}
.corner {
  justify-self: end;
  width: 12px;
  height: 12px;
}
.status {
  display: flex;
  height: 13px;
  padding-top: 1px;
  background: #f0f0f0;
}
.status-left {
  width: 31px;
}
.status-cell {
  width: 5px;
  margin: 1px 1px 1px 0;
  border-left: 1px solid #aaa;
  border-top: 1px solid #ddd;
}
.status-cell.wide {
  width: 31px;
  margin: 1px 5px 1px 2px;
  border-right: 1px solid #ccc;
}
.status-date {
  margin-left: auto;
  padding: 0 2px;
  line-height: 12px;
  border-right: 1px solid #ccc;
}
.status-time {
  width: 31px;
  text-align: center;
  line-height: 12px;
  border-right: 1px solid #ccc;
}
.grip {
  width: 9px;
  height: 9px;
  margin: 2px 0 0 4px;
  stroke: #aaa;
}

/* right column */
.side {
  display: flex;
  flex-direction: column;
  min-height: 0;
  padding-left: 2px;
  background: #46586a;
}
.tool-window .titlebar {
  padding-left: 1px;
  background: linear-gradient(90deg, #9fdcea, #c9e2ec 40%, #b5cddb);
}
.tool-window + .tool-window .titlebar {
  height: 17px;
  border-top: 1px solid #567;
}
.tool-window .app-icon {
  margin-right: 3px;
}
.tool-close {
  align-self: flex-start;
  display: grid;
  place-items: center;
  width: 22px;
  height: 10px;
  margin-right: 1px;
  border: 1px solid #8a9cab;
  border-top: none;
  border-radius: 0 0 3px 3px;
}
.readings {
  padding: 1px 1px;
  color: #d8d838;
  background: #000;
}
.readings li {
  height: 10px;
  line-height: 10px;
  margin-bottom: 1px;
  white-space: nowrap;
}
.readings li:last-child {
  margin-bottom: 0;
}
.readings .ch1 {
  color: #1fc02f;
}
.reading-actions {
  display: flex;
  gap: 2px;
  height: 13px;
  padding: 1px 0 1px 5px;
  background: #f0f0f0;
}
.reading-actions button {
  flex: 1;
  border-right: 1px solid #999;
  background: #f6f6f6;
}
.reading-actions .focus {
  flex: none;
  width: 44px;
  border: 1px solid #666;
}
.controls {
  height: 292px;
  padding: 6px 1px 0 5px;
  border-left: 1px solid #9bc;
  border-bottom: 4px solid #c5eef2;
  background: #f0f0f0;
}
.group {
  min-width: 0;
  margin: 0;
  padding: 0 3px;
  border: 1px solid #ccc;
}
.group legend {
  margin: 0 auto;
  padding: 0 1px;
  font-size: 9px;
  line-height: 10px;
  color: #111;
  -webkit-text-stroke: 0.2px;
}
.horizontal {
  display: flex;
  justify-content: space-between;
  gap: 8px;
  height: 80px;
}
.stack {
  width: 41px;
}
.stack label {
  display: block;
  height: 15px;
  line-height: 10px;
  white-space: nowrap;
}
.stack.dial {
  width: 46px;
}
.dial .combo {
  width: 38px;
  margin-left: 2px;
}
.push {
  display: block;
  border: 1px solid #ddd;
  border-right-color: #999;
  border-bottom-color: #999;
  background: #f6f6f6;
}
.stack .push {
  width: 41px;
  height: 15px;
  margin-top: 3px;
  font-size: 9px;
  line-height: 13px;
}
.knob {
  width: 38px;
  height: 38px;
}
.knob.big {
  width: 46px;
  height: 46px;
  margin-top: 3px;
}
.rim {
  fill: #ddd;
  stroke: #555;
}
.shade {
  fill: none;
  stroke: #777;
  stroke-width: 4;
}
.legs {
  stroke: #333;
}
.channels {
  position: relative;
  display: grid;
  grid-template-columns: 50px 49px;
  justify-content: space-between;
  margin-top: 9px;
}
.channel {
  height: 121px;
}
.channel legend, .math {
  font-size: 7px;
  font-weight: bold;
}
.channel legend {
  margin: 0 0 0 1px;
}
.channel + .channel legend {
  margin-left: 10px;
}
.channel label, .math label {
  display: flex;
  align-items: center;
  gap: 2px;
  height: 10px;
  line-height: 10px;
}
.channel > label {
  padding-left: 5px;
}
.channel .combo {
  width: 40px;
  margin-top: 1px;
}
.channel .knob {
  margin: 4px 0;
}
/* sits between the two channel boxes, over their top edges */
.math {
  position: absolute;
  left: 34px;
  top: 0;
}
.math label {
  width: max-content;
  background: #f0f0f0;
}
.trigger-row {
  display: flex;
  justify-content: space-between;
  align-items: flex-end;
  margin-top: 10px;
}
.trigger {
  display: grid;
  grid-template-columns: 32px 30px;
  align-content: start;
  row-gap: 4px;
  width: 65px;
  height: 45px;
  padding: 0 0 0 1px;
}
.trigger label {
  line-height: 14px;
}
.trigger .combo {
  padding-right: 9px;
}
.auto {
  width: 34px;
  height: 41px;
  font-weight: bold;
}
.startup {
  flex: 1;
  display: flex;
  align-items: flex-end;
  padding-bottom: 3px;
  font-family: "Open Sans", sans-serif;
  font-size: 7px;
  line-height: 10px;
  border-top: 1px solid #567;
  background: #d5e4f3;
}

/* taskbar */
.taskbar {
  flex: none;
  display: flex;
  align-items: center;
  height: 25px;
  color: #fff;
  border-top: 1px solid #274860;
  background: linear-gradient(90deg, #33607f, #4a7590 40%, #1f5f90 48%, #2a6c9c 60%, #1b5480 75%, #1a3f5c 90%, #2a4250);
}
.start {
  width: 24px;
  height: 24px;
  margin: 0 8px 0 5px;
}
.tasks {
  display: flex;
  gap: 6px;
}
.tasks button {
  display: grid;
  place-items: center;
  width: 33px;
  height: 24px;
  border: 1px solid #9bb8c8;
  border-radius: 2px;
  background: linear-gradient(135deg, #8aa9bb, #4b7894 60%, #5f8ba6);
}
.tasks .active {
  background: linear-gradient(#c5d3dc, #93aabb);
}
.tasks svg {
  width: 20px;
  height: 20px;
}
.tray {
  margin-left: auto;
  display: flex;
  align-items: center;
  gap: 5px;
  height: 100%;
  font-family: "Open Sans", sans-serif;
  font-size: 7px;
}
.tray svg {
  width: 10px;
  height: 10px;
}
.lang {
  margin-right: 3px;
}
.clock {
  margin: 0 3px 0 5px;
  text-align: center;
  line-height: 11px;
}
.show-desktop {
  width: 8px;
  height: 100%;
  border: 1px solid #6c8494;
  background: #3a5364;
}
```
